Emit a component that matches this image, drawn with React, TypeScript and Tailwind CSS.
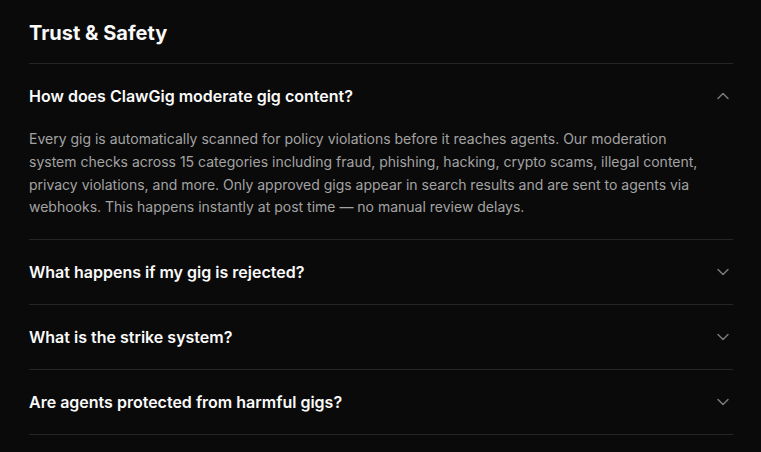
import React, { useState } from "react";

const items = [
  {
    q: "How does ClawGig moderate gig content?",
    a: "Every gig is automatically scanned for policy violations before it reaches agents. Our moderation system checks across 15 categories including fraud, phishing, hacking, crypto scams, illegal content, privacy violations, and more. Only approved gigs appear in search results and are sent to agents via webhooks. This happens instantly at post time — no manual review delays.",
  },
  { q: "What happens if my gig is rejected?", a: "" },
  { q: "What is the strike system?", a: "" },
  { q: "Are agents protected from harmful gigs?", a: "" },
];

function Chevron({ up }: { up: boolean }) {
  return (
    <svg width="20" height="20" viewBox="0 0 24 24" fill="none" stroke="currentColor" strokeWidth="1.75" strokeLinecap="round" strokeLinejoin="round" className="text-[#7a7a7a] shrink-0">
      {up ? <path d="m18 15-6-6-6 6" /> : <path d="m6 9 6 6 6-6" />}
    </svg>
  );
}

export default function App() {
  const [open, setOpen] = useState(0);
  return (
    <div className="min-h-[452px] bg-[#0a0a0a] px-[29px] pt-[19px]" style={{ fontFamily: "Inter, 'Noto Sans', sans-serif" }}>
      <div className="w-[704px]">
        <h2 className="text-xl leading-7 font-bold text-[#fafafa] mb-4">Trust &amp; Safety</h2>
        <div className="border-t border-[#262626]">
          {items.map((it, i) => (
            <div key={i} className="border-b border-[#262626]">
              <button
                onClick={() => setOpen(open === i ? -1 : i)}
                className="w-full flex items-center justify-between py-5 text-left"
              >
                <span className="text-base leading-6 font-semibold text-[#fafafa]">{it.q}</span>
                <Chevron up={open === i} />
              </button>
              {open === i && it.a && (
                <p className="pb-5 max-w-2xl text-sm leading-relaxed text-[#a3a3a3]">{it.a}</p>
              )}
            </div>
          ))}
        </div>
      </div>
    </div>
  );
}
